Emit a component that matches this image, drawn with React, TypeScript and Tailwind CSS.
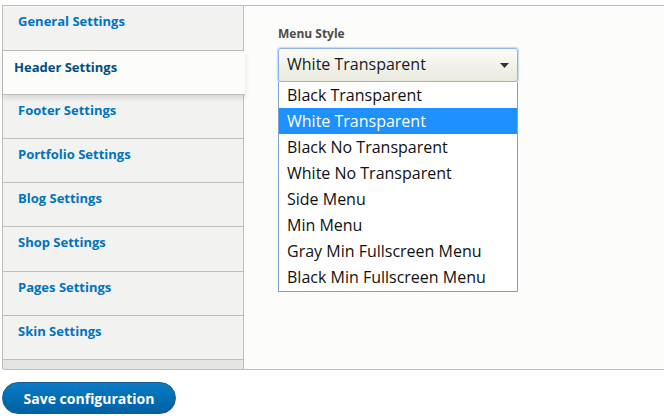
import { useState } from "react"

const tabs = [
  "General Settings",
  "Header Settings",
  "Footer Settings",
  "Portfolio Settings",
  "Blog Settings",
  "Shop Settings",
  "Pages Settings",
  "Skin Settings",
]

const menuStyles = [
  "Black Transparent",
  "White Transparent",
  "Black No Transparent",
  "White No Transparent",
  "Side Menu",
  "Min Menu",
  "Gray Min Fullscreen Menu",
  "Black Min Fullscreen Menu",
]

const uiFont = { fontFamily: '"Open Sans", "Noto Sans", sans-serif' }
const listFont = { fontFamily: '"Open Sans", "DejaVu Sans", sans-serif' }

export default function App() {
  const [active] = useState(1)
  const [selected] = useState(1)

  return (
    <div className="min-h-[419px] bg-white pt-[5px] pl-[2px]" style={uiFont}>
      {/* Vertical tabs + pane */}
      <div className="flex h-[365px]">
        <ul className="flex w-[242px] flex-col rounded-bl-[3px] border-y border-l border-[#bfbfba] bg-[#e6e5e1]">
          {tabs.map((tab, i) => {
            const h = i === 0 || i === 5 ? "h-[45px]" : "h-[44px]"
            return i === active ? (
              <li
                key={tab}
                className={`relative z-10 mr-[-1px] ${h} shrink-0 border-b border-[#bfbfba] bg-[#fcfcfa] pt-[7px] pl-[11px] text-[13px] font-bold text-[#004f80] shadow-[0_3px_5px_rgba(0,0,0,0.12)]`}
              >
                {tab}
              </li>
            ) : (
              <li
                key={tab}
                className={`${h} shrink-0 border-r border-b border-[#bfbfba] bg-[#f2f2f0] pt-[6px] pl-[15px] text-[13px] font-bold text-[#0074bd]`}
              >
                {tab}
              </li>
            )
          })}
          <li className="flex-1 border-r border-[#bfbfba]" />
        </ul>

        <div className="flex-1 border-y border-[#bfbfba] bg-[#fcfcfa] pt-[19px] pl-[34px]">
          <label className="block text-[12px] font-bold text-[#4d4d4d]">Menu Style</label>

          <div className="mt-[5px] w-[240px]">
            <div
              className="flex h-[34px] items-center justify-between rounded-[3px] border border-[#8eb3ea] bg-gradient-to-b from-[#fcfcfa] to-[#e9e9dd] pr-[8px] pl-[8px] pb-[2px] text-[16px] text-[#1a1a1a] shadow-[0_0_1px_1px_rgba(142,179,234,0.5)]"
              style={listFont}
            >
              <span>{menuStyles[selected]}</span>
              <svg width="9" height="5" viewBox="0 0 9 5" className="mt-[2px]">
                <path d="M0 0h9L4.5 5z" fill="#333" />
              </svg>
            </div>

            <ul className="border border-t-0 border-[#7f9fd0] bg-white pb-px text-[16px] text-[#111]" style={listFont}>
              {menuStyles.map((s, i) => (
                <li
                  key={s}
                  className={
                    i === selected
                      ? "flex h-[26px] items-center bg-[#1e90ff] pb-px pl-[8px] text-white"
                      : "flex h-[26px] items-center pb-px pl-[8px]"
                  }
                >
                  {s}
                </li>
              ))}
            </ul>
          </div>
        </div>
      </div>

      <button className="mt-[12px] h-[32px] w-[174px] rounded-full border border-[#1e5c90] bg-gradient-to-b from-[#0a7bc5] to-[#0062a3] text-[14px] font-bold text-white">
        Save configuration
      </button>
    </div>
  )
}
